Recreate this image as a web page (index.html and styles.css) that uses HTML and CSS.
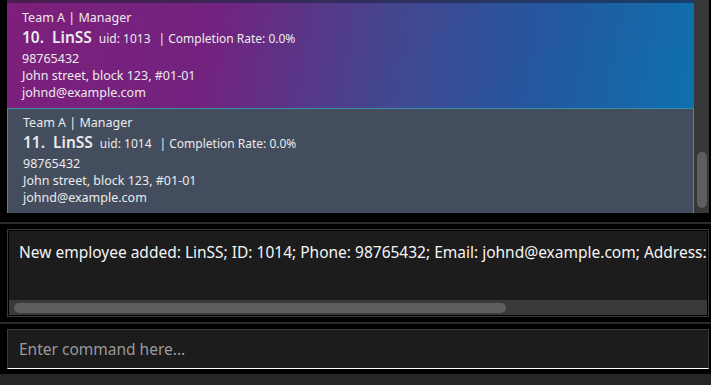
FILE: index.html
```html
<!DOCTYPE html>
<html lang="en">
<head>
    <meta charset="UTF-8">
    <title>Employees</title>
    <link rel="stylesheet" href="styles.css">
</head>
<body>
<div id="app">
    <div id="list-panel">
        <div id="list">
            <div class="card-edge"></div>
            <div class="card selected">
                <div class="card-tags">Team A | Manager</div>
                <div class="card-title">
                    <span class="card-name">10. LinSS</span>
                    <span class="card-uid">uid: 1013</span>
                    <span class="card-rate">| Completion Rate: 0.0%</span>
                </div>
                <div class="card-line">98765432</div>
                <div class="card-line">John street, block 123, #01-01</div>
                <div class="card-line">johnd@example.com</div>
            </div>
            <div class="card">
                <div class="card-tags">Team A | Manager</div>
                <div class="card-title">
                    <span class="card-name">11. LinSS</span>
                    <span class="card-uid">uid: 1014</span>
                    <span class="card-rate">| Completion Rate: 0.0%</span>
                </div>
                <div class="card-line">98765432</div>
                <div class="card-line">John street, block 123, #01-01</div>
                <div class="card-line">johnd@example.com</div>
            </div>
        </div>
        <div class="v-scroll"><div class="v-thumb"></div></div>
    </div>

    <div class="divider first"></div>

    <div id="result-box">
        <div id="result-inner">
            <div id="result-text">New employee added: LinSS; ID: 1014; Phone: 98765432; Email: johnd@example.com; Address: John street, block 123, #01-01</div>
            <div class="h-scroll"><div class="h-thumb"></div></div>
        </div>
    </div>

    <div class="divider"></div>

    <div id="command-box">
        <input type="text" id="commandInput" placeholder="Enter command here...">
    </div>

    <div id="status-bar"></div>
</div>
</body>
</html>
```

FILE: styles.css
```css
body {
    font-family: "Noto Sans", "Open Sans", sans-serif;
    margin: 0;
    padding: 0;
    background-color: #000;
    overflow: hidden;
}

#app {
    width: 711px;
    height: 385px;
    display: flex;
    flex-direction: column;
}

#list-panel {
    display: flex;
    height: 213px;
    padding-left: 7px;
    padding-right: 2px;
}

#list {
    flex-grow: 1;
    display: flex;
    flex-direction: column;
    overflow: hidden;
}

.card-edge {
    height: 3px;
    background: linear-gradient(to right, #4b1b4d, #16406a);
}

.card {
    height: 105px;
    box-sizing: border-box;
    padding: 5px 0 0 15px;
    color: #ebebeb;
    background-color: #434d5d;
    border: 1px solid #3a8ea6;
    border-bottom: none;
}

.card.selected {
    border: none;
    padding: 6px 0 0 15px;
    background: linear-gradient(100deg, #7d1f7b 0%, #72237f 30%, #44468f 55%, #2358a0 78%, #0e70ae 100%);
}

.card-tags {
    font-size: 12.5px;
    line-height: 17px;
}

.card-title {
    display: flex;
    align-items: baseline;
    line-height: 23px;
    font-size: 12px;
}

.card-name {
    font-size: 15.5px;
    font-weight: 600;
    word-spacing: 4px;
    margin-right: 7px;
}

.card-rate {
    margin-left: 8px;
}

.card-line {
    font-size: 12.5px;
    line-height: 17px;
}

.v-scroll {
    width: 15px;
    background-color: #383838;
    position: relative;
}

.v-thumb {
    position: absolute;
    left: 3px;
    top: 152px;
    width: 10px;
    height: 56px;
    border-radius: 5px;
    background-color: #5e5e5e;
}

.divider {
    height: 2px;
    margin: 5px 0;
    background-color: #2a2a2a;
}

.divider.first {
    margin-top: 9px;
}

#result-box {
    height: 88px;
    margin: 0 2px 0 7px;
    box-sizing: border-box;
    border: 1px solid #3a3a3a;
    padding: 1px;
}

#result-inner {
    height: 100%;
    display: flex;
    flex-direction: column;
    background-color: #1c1c1c;
    overflow: hidden;
}

#result-text {
    flex-grow: 1;
    padding: 10px 0 0 10px;
    white-space: nowrap;
    font-size: 15.5px;
    color: #f4f4f4;
}

.h-scroll {
    height: 15px;
    background-color: #3a3a3a;
    position: relative;
}

.h-thumb {
    position: absolute;
    left: 5px;
    top: 3px;
    width: 492px;
    height: 10px;
    border-radius: 5px;
    background-color: #5e5e5e;
}

#command-box {
    height: 40px;
    margin: 0 2px 0 7px;
    box-sizing: border-box;
    border: 1px solid #3a3a3a;
    border-bottom: 1px solid #ffffff;
    background-color: #1c1c1c;
}

#commandInput {
    width: 100%;
    height: 100%;
    box-sizing: border-box;
    padding: 0 11px;
    border: none;
    outline: none;
    background: transparent;
    font-family: inherit;
    font-size: 15.5px;
    color: #f4f4f4;
}

#commandInput::placeholder {
    color: #9a9a9a;
}

#status-bar {
    margin-top: 5px;
    flex-grow: 1;
    background-color: #262626;
}
```
